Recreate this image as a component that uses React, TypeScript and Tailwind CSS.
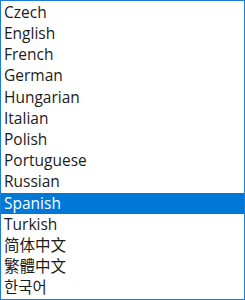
const languages = [
  "Czech",
  "English",
  "French",
  "German",
  "Hungarian",
  "Italian",
  "Polish",
  "Portuguese",
  "Russian",
  "Spanish",
  "Turkish",
  "简体中文",
  "繁體中文",
  "한국어",
];

const selected = "Spanish";

export default function App() {
  return (
    <div className="h-[300px] w-[245px] overflow-hidden border border-[#1a7fd4] bg-white pt-[1px] font-['Open_Sans','Noto_Sans_CJK_SC','Noto_Sans_CJK_KR',sans-serif] text-[15.5px] text-[#1b1b1b]">
      <ul>
        {languages.map((lang) => (
          <li
            key={lang}
            className={
              lang === selected
                ? "flex h-[21.2px] items-center bg-[#0078d7] pl-[3px] leading-none text-white"
                : "flex h-[21.2px] items-center pl-[3px] leading-none"
            }
          >
            {lang}
          </li>
        ))}
      </ul>
    </div>
  );
}
